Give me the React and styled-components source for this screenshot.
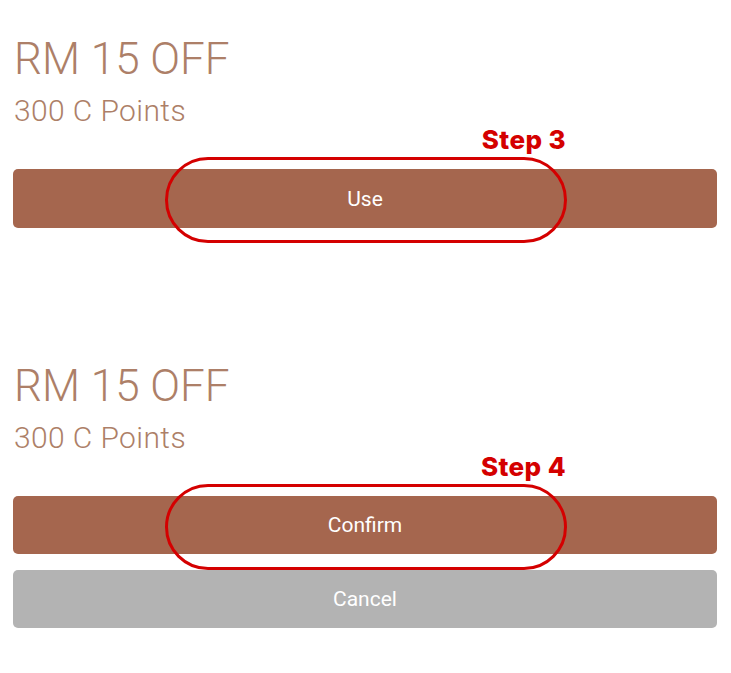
import React from "react";
import styled, { createGlobalStyle } from "styled-components";

const GlobalStyle = createGlobalStyle`
    html, body {
        margin: 0;
        padding: 0;
        background: #fff;
    }
    * {
        box-sizing: border-box;
    }
`

const Page = styled.div`
    font-family: Roboto, "Liberation Sans", sans-serif;
    padding: 33px 14px 0 13px;
    display: flex;
    flex-direction: column;
    gap: 132px;
`

const Voucher = styled.section`
    display: flex;
    flex-direction: column;
`

const Title = styled.h1`
    margin: 0;
    font-size: 44px;
    line-height: 52px;
    font-weight: 300;
    color: #ad7f68;
    padding-left: 1px;
`

const Points = styled.div`
    margin-top: 8px;
    font-size: 30px;
    line-height: 36px;
    font-weight: 300;
    letter-spacing: 0.4px;
    color: #ad7f68;
    padding-left: 1px;
`

const Actions = styled.div`
    margin-top: 40px;
    display: flex;
    flex-direction: column;
    gap: 16px;
`

const ButtonWrap = styled.div`
    position: relative;
`

const Button = styled.button`
    display: flex;
    align-items: center;
    justify-content: center;
    width: 100%;
    height: ${p => p.$h || 58}px;
    border: none;
    border-radius: 5px;
    background: ${p => p.$grey ? "#b3b3b3" : "#a5664e"};
    color: #fff;
    font-family: Roboto, "Liberation Sans", sans-serif;
    font-size: 21px;
    font-weight: 400;
    cursor: pointer;
`

const Ring = styled.div`
    position: absolute;
    left: 152px;
    top: -12px;
    width: 402px;
    height: 86px;
    border: 3px solid #d40000;
    border-radius: 43px;
    pointer-events: none;
`

const StepLabel = styled.span`
    position: absolute;
    right: -2px;
    bottom: calc(100% + 7px);
    font-family: Inter, "Open Sans", sans-serif;
    font-weight: 800;
    font-size: 26px;
    line-height: 26px;
    color: #d40000;
    white-space: nowrap;
    letter-spacing: 0.4px;
`

const Annotated = ({ step, children }) => (
    <ButtonWrap>
        {children}
        <Ring>
            <StepLabel>Step {step}</StepLabel>
        </Ring>
    </ButtonWrap>
)

const App = () => {
    return (
        <>
            <GlobalStyle />
            <Page>
                <Voucher>
                    <Title>RM 15 OFF</Title>
                    <Points>300 C Points</Points>
                    <Actions>
                        <Annotated step={3}>
                            <Button $h={59}>Use</Button>
                        </Annotated>
                    </Actions>
                </Voucher>

                <Voucher>
                    <Title>RM 15 OFF</Title>
                    <Points>300 C Points</Points>
                    <Actions>
                        <Annotated step={4}>
                            <Button>Confirm</Button>
                        </Annotated>
                        <Button $grey>Cancel</Button>
                    </Actions>
                </Voucher>
            </Page>
        </>
    )
}

export default App
